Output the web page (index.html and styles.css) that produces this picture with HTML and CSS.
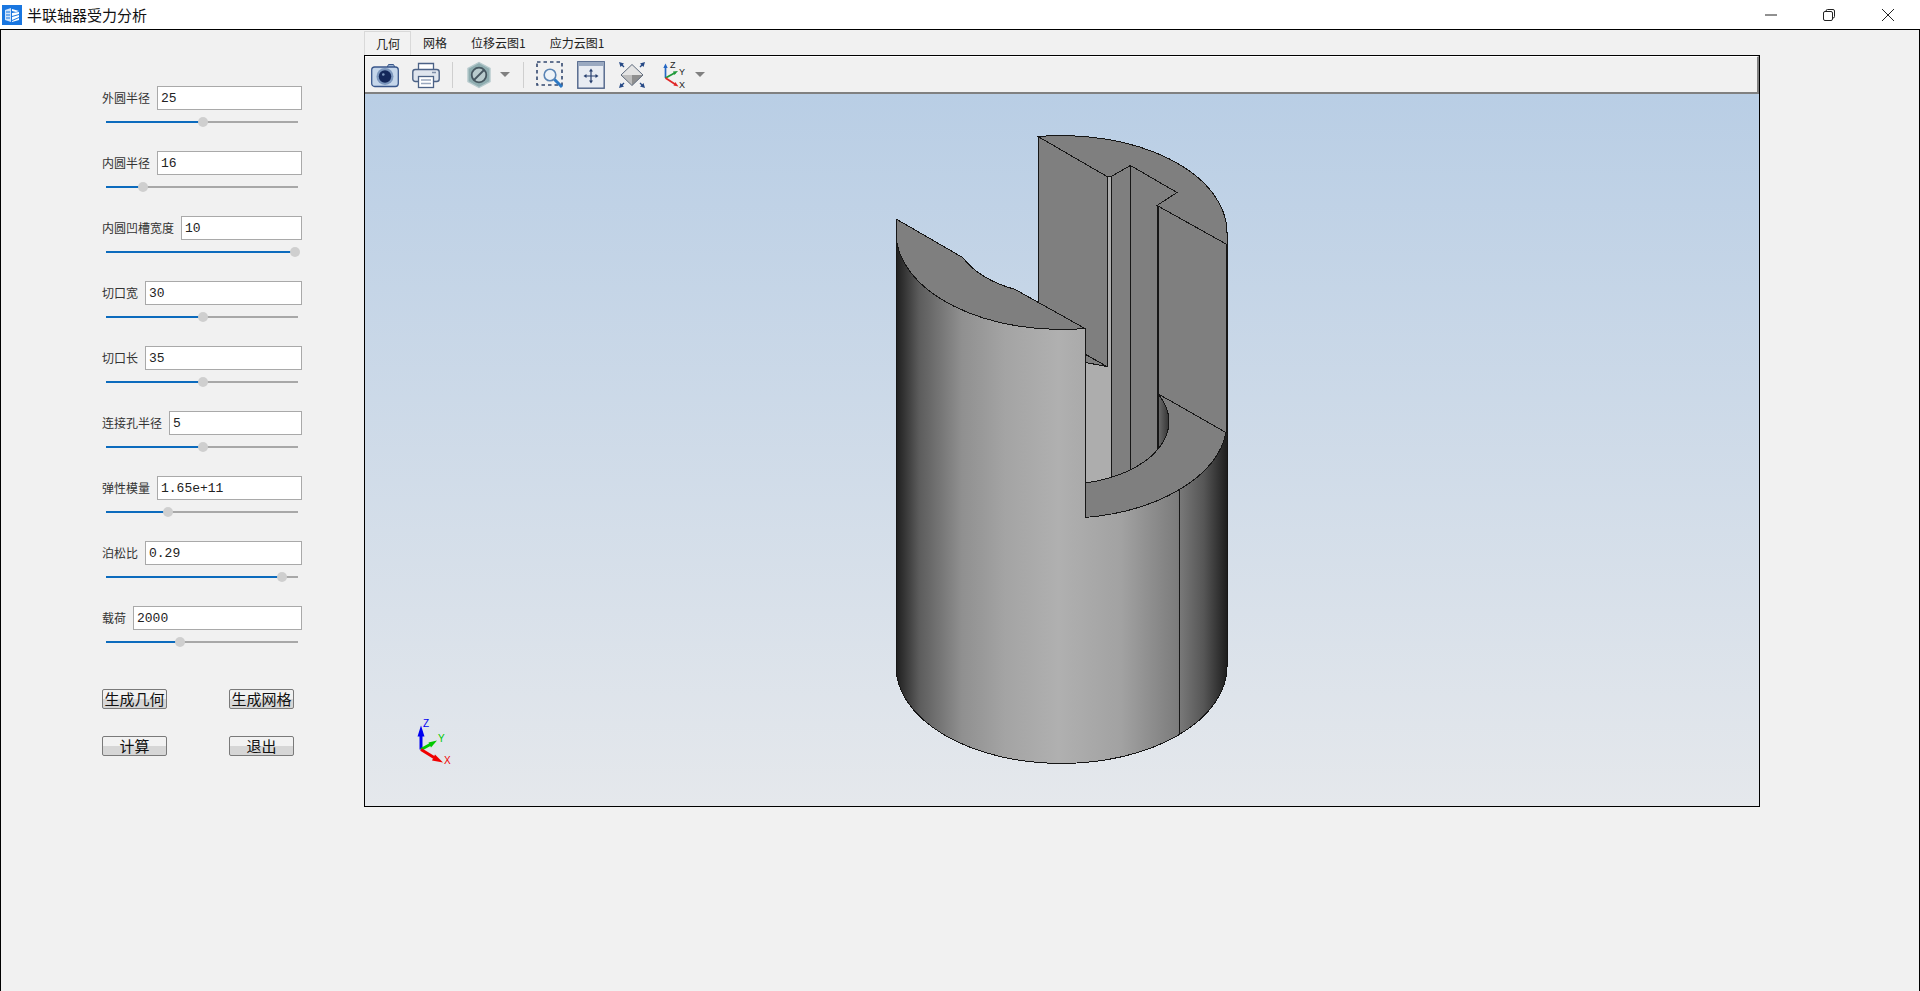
FILE: index.html
```html
<!DOCTYPE html>
<html lang="zh">
<head>
<meta charset="utf-8">
<title>半联轴器受力分析</title>
<link rel="stylesheet" href="styles.css">
</head>
<body>
<header class="titlebar">
  <svg class="app-icon" viewBox="0 0 20 20">
    <rect width="20" height="20" fill="#1976e0"/>
    <path d="M3 5 9 3v14l-6-2z" fill="#cfe3fb"/>
    <path d="M10 4l7 2-3 1-4-1zM10 8l7-1v2l-7 2zM10 12l7-2v2l-7 3zM10 16l7-3v2l-7 2z" fill="#fff"/>
    <path d="M4 7h4M4 10h4M4 13h4" stroke="#1976e0" stroke-width="1.2"/>
  </svg>
  <span class="app-title">半联轴器受力分析</span>
  <div class="win-controls">
    <svg class="win-btn" viewBox="0 0 12 12"><path d="M0 6h12" stroke="#222" stroke-width="1" fill="none"/></svg>
    <svg class="win-btn" viewBox="0 0 12 12"><rect x=".5" y="2.5" width="9" height="9" rx="1.5" stroke="#222" fill="none"/><path d="M3 2.5V2A1.500 1.500 0 0 1 4.500.5h5.500a1.500 1.500 0 0 1 1.500 1.500v5.500A1.500 1.500 0 0 1 10 9" stroke="#222" fill="none"/></svg>
    <svg class="win-btn win-close" viewBox="0 0 12 12"><path d="M0 0l12 12M12 0 0 12" stroke="#222" stroke-width="1" fill="none"/></svg>
  </div>
</header>
<main class="main">
  <section class="panel">
    <div class="field"><div class="field-row"><label class="field-label">外圆半径</label><input class="field-input" value="25"></div><div class="slider"><div class="slider-fill" style="width:50.5%"><span class="slider-thumb"></span></div></div></div>
    <div class="field"><div class="field-row"><label class="field-label">内圆半径</label><input class="field-input" value="16"></div><div class="slider"><div class="slider-fill" style="width:19.5%"><span class="slider-thumb"></span></div></div></div>
    <div class="field"><div class="field-row"><label class="field-label">内圆凹槽宽度</label><input class="field-input" value="10"></div><div class="slider"><div class="slider-fill" style="width:98.5%"><span class="slider-thumb"></span></div></div></div>
    <div class="field"><div class="field-row"><label class="field-label">切口宽</label><input class="field-input" value="30"></div><div class="slider"><div class="slider-fill" style="width:50.5%"><span class="slider-thumb"></span></div></div></div>
    <div class="field"><div class="field-row"><label class="field-label">切口长</label><input class="field-input" value="35"></div><div class="slider"><div class="slider-fill" style="width:50.5%"><span class="slider-thumb"></span></div></div></div>
    <div class="field"><div class="field-row"><label class="field-label">连接孔半径</label><input class="field-input" value="5"></div><div class="slider"><div class="slider-fill" style="width:50.5%"><span class="slider-thumb"></span></div></div></div>
    <div class="field"><div class="field-row"><label class="field-label">弹性模量</label><input class="field-input" value="1.65e+11"></div><div class="slider"><div class="slider-fill" style="width:32.5%"><span class="slider-thumb"></span></div></div></div>
    <div class="field"><div class="field-row"><label class="field-label">泊松比</label><input class="field-input" value="0.29"></div><div class="slider"><div class="slider-fill" style="width:91.500%"><span class="slider-thumb"></span></div></div></div>
    <div class="field"><div class="field-row"><label class="field-label">载荷</label><input class="field-input" value="2000"></div><div class="slider"><div class="slider-fill" style="width:38.5%"><span class="slider-thumb"></span></div></div></div>
    <div class="actions">
      <button class="action">生成几何</button>
      <button class="action">生成网格</button>
      <button class="action">计算</button>
      <button class="action">退出</button>
    </div>
  </section>
  <section class="workspace">
    <nav class="tabs">
      <span class="tab tab-active">几何</span>
      <span class="tab">网格</span>
      <span class="tab">位移云图1</span>
      <span class="tab">应力云图1</span>
    </nav>
    <div class="frame">
      <div class="toolbar">
        <svg class="tool" viewBox="0 0 28 28">
          <path d="M16 6.500 17.500 3.500h5L24 6.500z" fill="#9db4d2" stroke="#38568a" stroke-width="1"/>
          <rect x=".7" y="6" width="26.600" height="19.500" rx="3" fill="#c5d6ea" stroke="#38568a" stroke-width="1.300"/>
          <circle cx="14" cy="15.500" r="8.500" fill="#7c97bd"/>
          <circle cx="14" cy="15.500" r="6.200" fill="#14285a"/>
          <circle cx="12.300" cy="13.500" r="1.300" fill="#7c97bd"/>
        </svg>
        <svg class="tool" viewBox="0 0 28 28">
          <path d="M6.500 9V2.500h15V9" fill="#fff" stroke="#4c6286" stroke-width="1.300"/>
          <rect x=".8" y="8.500" width="26.400" height="12" rx="2.500" fill="#dfe5ee" stroke="#4c6286" stroke-width="1.400"/>
          <rect x="6.500" y="15.500" width="15" height="11" fill="#fff" stroke="#4c6286" stroke-width="1.300"/>
          <path d="M9 19h10M9 22.500h10" stroke="#9aa8be" stroke-width="1.500"/>
          <path d="M20 11.500h4" stroke="#7d8ea8" stroke-width="1.500"/>
        </svg>
        <span class="tool-sep"></span>
        <svg class="tool tool-hex" viewBox="0 0 24 28">
          <path d="M12 1.500 23 7.500v13L12 26.500 1 20.500v-13z" fill="#8fadb0" stroke="#b5c9cc" stroke-width="1.400"/>
          <circle cx="12" cy="14" r="7.300" fill="#b9cbcd" stroke="#46565f" stroke-width="1.800"/>
          <path d="M7 19 17 9" stroke="#46565f" stroke-width="1.800"/>
        </svg>
        <span class="tool-caret"></span>
        <span class="tool-sep tool-sep-b"></span>
        <svg class="tool" viewBox="0 0 28 28">
          <rect x="1" y="1" width="25" height="23" fill="none" stroke="#33486f" stroke-width="1.600" stroke-dasharray="3.500 3"/>
          <circle cx="14" cy="14" r="5.800" fill="#eef3f8" stroke="#5a84b4" stroke-width="1.600"/>
          <path d="M18.500 18.500 26 26" stroke="#2b78c4" stroke-width="3"/>
        </svg>
        <svg class="tool" viewBox="0 0 28 28">
          <rect x=".8" y=".8" width="26.400" height="26.400" fill="#e8ecf2" stroke="#4e6388" stroke-width="1.400"/>
          <rect x="1" y="1" width="26" height="4" fill="#9aa9c0"/>
          <path d="M14 9.500v11M8.500 15h11" stroke="#273f6e" stroke-width="1.200"/>
          <path d="M14 7.500l2 3h-4zM14 22.500l2-3h-4zM6.500 15l3-2v4zM21.500 15l-3-2v4z" fill="#273f6e"/>
        </svg>
        <svg class="tool" viewBox="0 0 28 28">
          <path d="M14 3.500 25 14H3z" fill="#e4e4e4"/>
          <path d="M3 14h11v10.500z" fill="#bdbdbd"/>
          <path d="M14 14H25L14 24.500z" fill="#8f8f8f"/>
          <path d="M14 3.500 25 14 14 24.500 3 14z" fill="none" stroke="#5f6b7d" stroke-width="1"/>
          <path d="M1 1l5 1.500L2.500 6zM27 1l-5 1.500L25.500 6zM1 27l5-1.500L2.500 22zM27 27l-5-1.500 3.500-3.500z" fill="#274a86"/>
          <path d="M3 3l3 3M25 3l-3 3M3 25l3-3M25 25l-3-3" stroke="#274a86" stroke-width="1.400"/>
        </svg>
        <svg class="tool tool-axes" viewBox="0 0 28 28">
          <path d="M6.500 17V5" stroke="#2467c4" stroke-width="1.700"/>
          <path d="M6.500 2.500l2.200 4.500H4.300z" fill="#2467c4"/>
          <path d="M6.500 17l10-5.500" stroke="#1f9a3a" stroke-width="1.800"/>
          <path d="M19 10l-3.600 4-1.400-3.400z" fill="#1f9a3a"/>
          <path d="M6.500 17l10 6.500" stroke="#e02828" stroke-width="1.800"/>
          <path d="M19.500 25.500l-5-1 1.800-3.400z" fill="#e02828"/>
          <text x="11" y="7" class="axis-letter">Z</text>
          <text x="20" y="14" class="axis-letter">Y</text>
          <text x="20" y="27" class="axis-letter">X</text>
        </svg>
        <span class="tool-caret tool-caret-b"></span>
      </div>
      <div class="viewport">
        <svg class="scene" viewBox="365 94 1394 711">
          <defs>
            <linearGradient id="outerShade" gradientUnits="userSpaceOnUse" x1="896" y1="0" x2="1227" y2="0">
              <stop offset="0" stop-color="#1e1e1e"/>
              <stop offset=".07" stop-color="#5c5c5c"/>
              <stop offset=".2" stop-color="#909090"/>
              <stop offset=".33" stop-color="#a4a4a4"/>
              <stop offset=".49" stop-color="#b0b0b0"/>
              <stop offset=".68" stop-color="#a2a2a2"/>
              <stop offset=".85" stop-color="#7c7c7c"/>
              <stop offset=".93" stop-color="#565656"/>
              <stop offset="1" stop-color="#1e1e1e"/>
            </linearGradient>
            <linearGradient id="holeShade" gradientUnits="userSpaceOnUse" x1="1158" y1="0" x2="1170" y2="0">
              <stop offset="0" stop-color="#6c6c6c"/>
              <stop offset="1" stop-color="#2e2e2e"/>
            </linearGradient>
          </defs>
          <g class="edges">
            <path class="face" d="M1038 136 1107 176V366L1038 327z"/>
            <path class="lit" d="M1080 360 1107 366V176H1111V500H1080z"/>
            <path class="face" d="M1080 351 1107 366 1080 361z"/>
            <path class="face" d="M1111 176 1130.500 165V490H1111z"/>
            <path class="face" d="M1130.500 165 1177 192 1157 205V490H1130.500z"/>
            <path class="face" d="M1157 205 1227 244V440H1157z"/>
            <path class="face" d="M1038 136A165.500 97 0 0 1 1227 232V244L1157 205 1177 192 1130.500 165 1111 176H1107z"/>
            <path class="hole" d="M1158 393.300A107.500 63 0 0 1 1158 448.700z"/>
            <path class="face" d="M1158 393.300 1226 432A165.500 97 0 0 1 1085 517V482.500A107.500 63 0 0 0 1158 393.300z"/>
            <path class="outer" d="M896 232A165.500 97 0 0 0 1085 328V517A165.500 97 0 0 0 1226 432H1227V666A165.500 97 0 0 1 896 666z"/>
            <path class="face" d="M897 219 963 257.200A107.500 63 0 0 0 1015 288.900L1085 328A165.500 97 0 0 1 896 232z"/>
            <path class="thick" d="M1158 205V394M1227 244V432"/>
            <path class="edge" d="M1111 180V477M1130.500 165V469M1179 489V734"/>
          </g>
          <g class="triad">
            <path d="M421 749V731" stroke="#0000f0" stroke-width="3"/>
            <path d="M421 725l3.500 11h-7z" fill="#0000f0"/>
            <path d="M421 749 432 743" stroke="#00c800" stroke-width="3"/>
            <path d="M437 740l-6 7-2.500-5z" fill="#00c800"/>
            <path d="M421 749 434 757" stroke="#f00000" stroke-width="3"/>
            <path d="M443 762l-11 -2 3-6z" fill="#f00000"/>
            <text x="423" y="726" class="triad-z">Z</text>
            <text x="438" y="741" class="triad-y">Y</text>
            <text x="444" y="763" class="triad-x">X</text>
          </g>
        </svg>
      </div>
    </div>
  </section>
</main>
</body>
</html>
```
FILE: styles.css
```css
* { box-sizing: border-box; }
html, body { margin: 0; height: 100%; }
body {
  width: 1920px;
  height: 991px;
  overflow: hidden;
  display: flex;
  flex-direction: column;
  background: #fff;
  font-family: "Noto Sans CJK SC", "Liberation Sans", sans-serif;
  color: #222;
}
.titlebar {
  height: 29px;
  flex: none;
  display: flex;
  align-items: center;
  padding-left: 2px;
  background: #fff;
}
.app-icon { width: 20px; height: 20px; margin-right: 5px; }
.app-title { font-size: 15px; line-height: 20px; color: #111; }
.win-controls { margin-left: auto; display: flex; gap: 46px; padding-right: 26px; }
.win-btn { width: 12px; height: 12px; display: block; }
.win-close { margin-left: 1px; }
.main {
  flex: 1;
  display: flex;
  background: #f1f1f1;
  border: 1px solid #000;
  border-bottom: none;
}
.panel {
  width: 363px;
  flex: none;
  padding: 56px 0 0 101px;
}
.field { width: 200px; height: 65px; }
.field-row { display: flex; align-items: center; gap: 7px; height: 24px; }
.field-label { font-size: 12px; line-height: 24px; white-space: nowrap; color: #333; }
.field-input {
  flex: 1;
  min-width: 0;
  height: 24px;
  padding: 0 3px;
  border: 1px solid #a9a9a9;
  background: #fff;
  font: 13px "Liberation Mono", monospace;
  color: #222;
  outline: none;
}
.slider {
  position: relative;
  width: 192px;
  height: 2px;
  margin: 11px 0 0 4px;
  background: #a8a8a8;
}
.slider-fill { position: relative; height: 2px; background: #0c6bbd; }
.slider-thumb {
  position: absolute;
  right: -5px;
  top: -4px;
  width: 10px;
  height: 10px;
  border-radius: 50%;
  background: #cfcfcf;
}
.actions {
  display: grid;
  grid-template-columns: 65px 65px;
  justify-content: space-between;
  width: 192px;
  row-gap: 27px;
  margin-top: 18px;
}
.action {
  height: 20px;
  width: 65px;
  padding: 0;
  border: 1px solid #7a7a7a;
  border-radius: 2px;
  background: linear-gradient(#f2f2f2 0 50%, #d6d6d6 50% 100%);
  font: 15px/18px "Noto Sans CJK SC", sans-serif;
  color: #111;
}
.workspace { width: 1396px; flex: none; display: flex; flex-direction: column; }
.tabs { height: 25px; flex: none; display: flex; padding-top: 1px; }
.tab { padding: 0 12px; font-size: 12px; line-height: 24px; color: #222; }
.tab-active {
  padding: 0 10px 0 11px;
  border: 1px solid #d9d9d9;
  border-bottom: none;
  background: #f2f2f2;
}
.frame {
  height: 752px;
  flex: none;
  display: flex;
  flex-direction: column;
  border: 1px solid #000;
}
.toolbar {
  height: 38px;
  flex: none;
  display: flex;
  align-items: center;
  padding-left: 6px;
  background: #f1f1f1;
  border-top: 1px solid #fff;
  border-right: 2px solid #808080;
  border-bottom: 2px solid #808080;
}
.tool { width: 28px; height: 28px; flex: none; margin-right: 13px; }
.tool-sep { width: 1px; height: 26px; flex: none; margin: 0 14px 0 -1px; background: #cfcfcf; }
.tool-sep-b { margin-left: 13px; margin-right: 12px; }
.tool-hex { width: 24px; margin-right: 9px; }
.tool-axes { margin-left: 0; margin-right: 8px; }
.tool-caret {
  width: 0;
  height: 0;
  flex: none;
  border-left: 5px solid transparent;
  border-right: 5px solid transparent;
  border-top: 5px solid #808080;
}
.viewport {
  flex: 1;
  min-height: 0;
  background: linear-gradient(#b9cee5, #e5e8ec);
}
.scene { display: block; width: 100%; height: 100%; }
.axis-letter { font: 9px "Liberation Sans", sans-serif; fill: #222; }
.edges path { stroke: #161616; stroke-width: 1; shape-rendering: crispEdges; }
.edges .face { fill: #7f7f7f; }
.edges .lit { fill: #adadad; }
.edges .hole { fill: url(#holeShade); }
.edges .outer { fill: url(#outerShade); }
.edges .edge { fill: none; }
.edges .thick { fill: none; stroke-width: 2; }
.triad text { font: 10px "Liberation Sans", sans-serif; }
.triad-z { fill: #0000f0; }
.triad-y { fill: #00c800; }
.triad-x { fill: #f00000; }
```
